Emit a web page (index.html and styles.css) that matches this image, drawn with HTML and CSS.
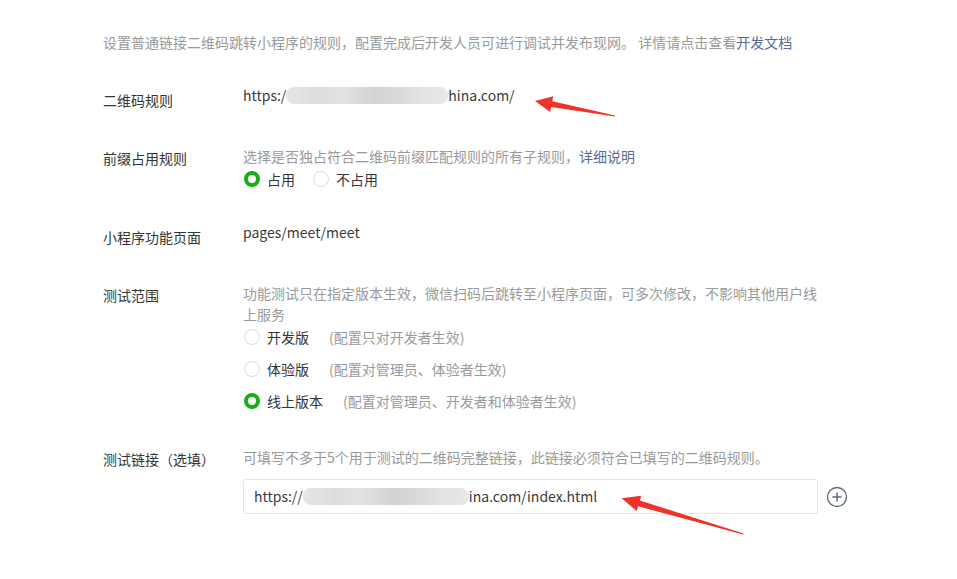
FILE: index.html
```html
<!DOCTYPE html>
<html lang="zh-CN">
<head>
    <meta charset="UTF-8">
    <title>扫普通链接二维码打开小程序</title>
    <link rel="stylesheet" href="styles.css">
</head>
<body>
    <div class="page">
        <p class="intro">设置普通链接二维码跳转小程序的规则，配置完成后开发人员可进行调试并发布现网。 详情请点击查看<a class="link" href="#">开发文档</a></p>

        <div class="form-row">
            <div class="label">二维码规则</div>
            <div class="content">
                <div class="value">https:/<span class="mask mask-rule"></span>hina.com/</div>
            </div>
        </div>

        <div class="form-row">
            <div class="label">前缀占用规则</div>
            <div class="content">
                <div class="desc">选择是否独占符合二维码前缀匹配规则的所有子规则，<a class="link" href="#">详细说明</a></div>
                <div class="radio-inline">
                    <label class="radio"><span class="dot checked"></span>占用</label>
                    <label class="radio"><span class="dot"></span>不占用</label>
                </div>
            </div>
        </div>

        <div class="form-row">
            <div class="label">小程序功能页面</div>
            <div class="content">
                <div class="value">pages/meet/meet</div>
            </div>
        </div>

        <div class="form-row">
            <div class="label">测试范围</div>
            <div class="content">
                <div class="desc">功能测试只在指定版本生效，微信扫码后跳转至小程序页面，可多次修改，不影响其他用户线上服务</div>
                <div class="radio-list">
                    <label class="radio"><span class="dot"></span>开发版<span class="note">(配置只对开发者生效)</span></label>
                    <label class="radio"><span class="dot"></span>体验版<span class="note">(配置对管理员、体验者生效)</span></label>
                    <label class="radio"><span class="dot checked"></span>线上版本<span class="note">(配置对管理员、开发者和体验者生效)</span></label>
                </div>
            </div>
        </div>

        <div class="form-row">
            <div class="label">测试链接（选填）</div>
            <div class="content">
                <div class="desc">可填写不多于5个用于测试的二维码完整链接，此链接必须符合已填写的二维码规则。</div>
                <div class="input-line">
                    <div class="input">https://<span class="mask mask-link"></span>ina.com/index.html</div>
                    <svg class="add" width="22" height="22" viewBox="0 0 22 22">
                        <circle cx="11" cy="11" r="9.5" fill="none" stroke="#5d6885" stroke-width="1.3"/>
                        <path d="M11 6.5v9M6.5 11h9" stroke="#5d6885" stroke-width="1.5" fill="none"/>
                    </svg>
                </div>
            </div>
        </div>
    </div>

    <!-- 标注箭头 -->
    <svg class="marks" width="957" height="579" viewBox="0 0 957 579">
        <polygon points="615.1,115.5 552.3,101.2 553.2,96.2 535,101 550.2,112 551.1,107 614.9,116.6" fill="#f0322b"/>
        <polygon points="743.5,533.4 639.8,500.5 641.3,495.7 621.7,498.3 636.7,511.1 638.2,506.3 743.1,534.6" fill="#f0322b"/>
    </svg>
</body>
</html>
```

FILE: styles.css
```css
:root {
    --texto: #353535;
    --texto-valor: #3a3a3a;
    --texto-fraco: #9a9a9a;
    --link: #576b95;
    --verde: #1aad19;
    --borda: #e4e8eb;
}

body {
    margin: 0;
    background: #fff;
    color: var(--texto);
    font-family: "Noto Sans CJK SC", "Open Sans", sans-serif;
    font-size: 14px;
}

.page {
    position: relative;
    padding: 32px 0 40px 103px;
}

.intro {
    margin: 0 0 36px;
    line-height: 20px;
    color: var(--texto-fraco);
}

.link {
    color: var(--link);
    text-decoration: none;
}

.form-row {
    display: flex;
    align-items: flex-start;
    margin-bottom: 36px;
}

.label {
    width: 140px;
    flex-shrink: 0;
    padding-top: 2px;
    line-height: 20px;
}

.content {
    width: 576px;
}

.value {
    margin-top: -3px;
    font-size: 14px;
    line-height: 20px;
    color: var(--texto-valor);
}

.desc {
    color: var(--texto-fraco);
    line-height: 21px;
}

.mask {
    display: inline-block;
    height: 17px;
    vertical-align: -3px;
    border-radius: 8px;
    background: linear-gradient(90deg, #e6e6e6 0%, #dcdcdc 20%, #e2e2e2 35%, #d3d3d3 55%, #dadada 70%, #e3e3e3 85%, #e9e9e9 100%);
    filter: blur(0.6px);
}

.mask-rule {
    width: 162px;
}

.mask-link {
    width: 166px;
}

.radio-inline {
    display: flex;
    gap: 17px;
    margin-top: 2px;
}

.radio-list {
    display: flex;
    flex-direction: column;
    gap: 12px;
    margin-top: 2px;
}

.radio {
    display: flex;
    align-items: center;
    line-height: 20px;
}

.dot {
    width: 16px;
    height: 16px;
    box-sizing: border-box;
    border: 1px solid #dcdcdc;
    border-radius: 50%;
    margin: 0 7px 0 1px;
}

.dot.checked {
    border: 4px solid var(--verde);
}

.note {
    margin-left: 20px;
    color: var(--texto-fraco);
}

.input-line {
    display: flex;
    align-items: center;
    margin-top: 11px;
}

.input {
    box-sizing: border-box;
    width: 575px;
    height: 35px;
    padding: 0 10px;
    border: 1px solid var(--borda);
    border-radius: 2px;
    font-size: 14px;
    line-height: 33px;
    color: var(--texto-valor);
    flex-shrink: 0;
}

.add {
    margin-left: 8px;
    flex-shrink: 0;
}

.marks {
    position: absolute;
    left: 0;
    top: 0;
    pointer-events: none;
}
```
